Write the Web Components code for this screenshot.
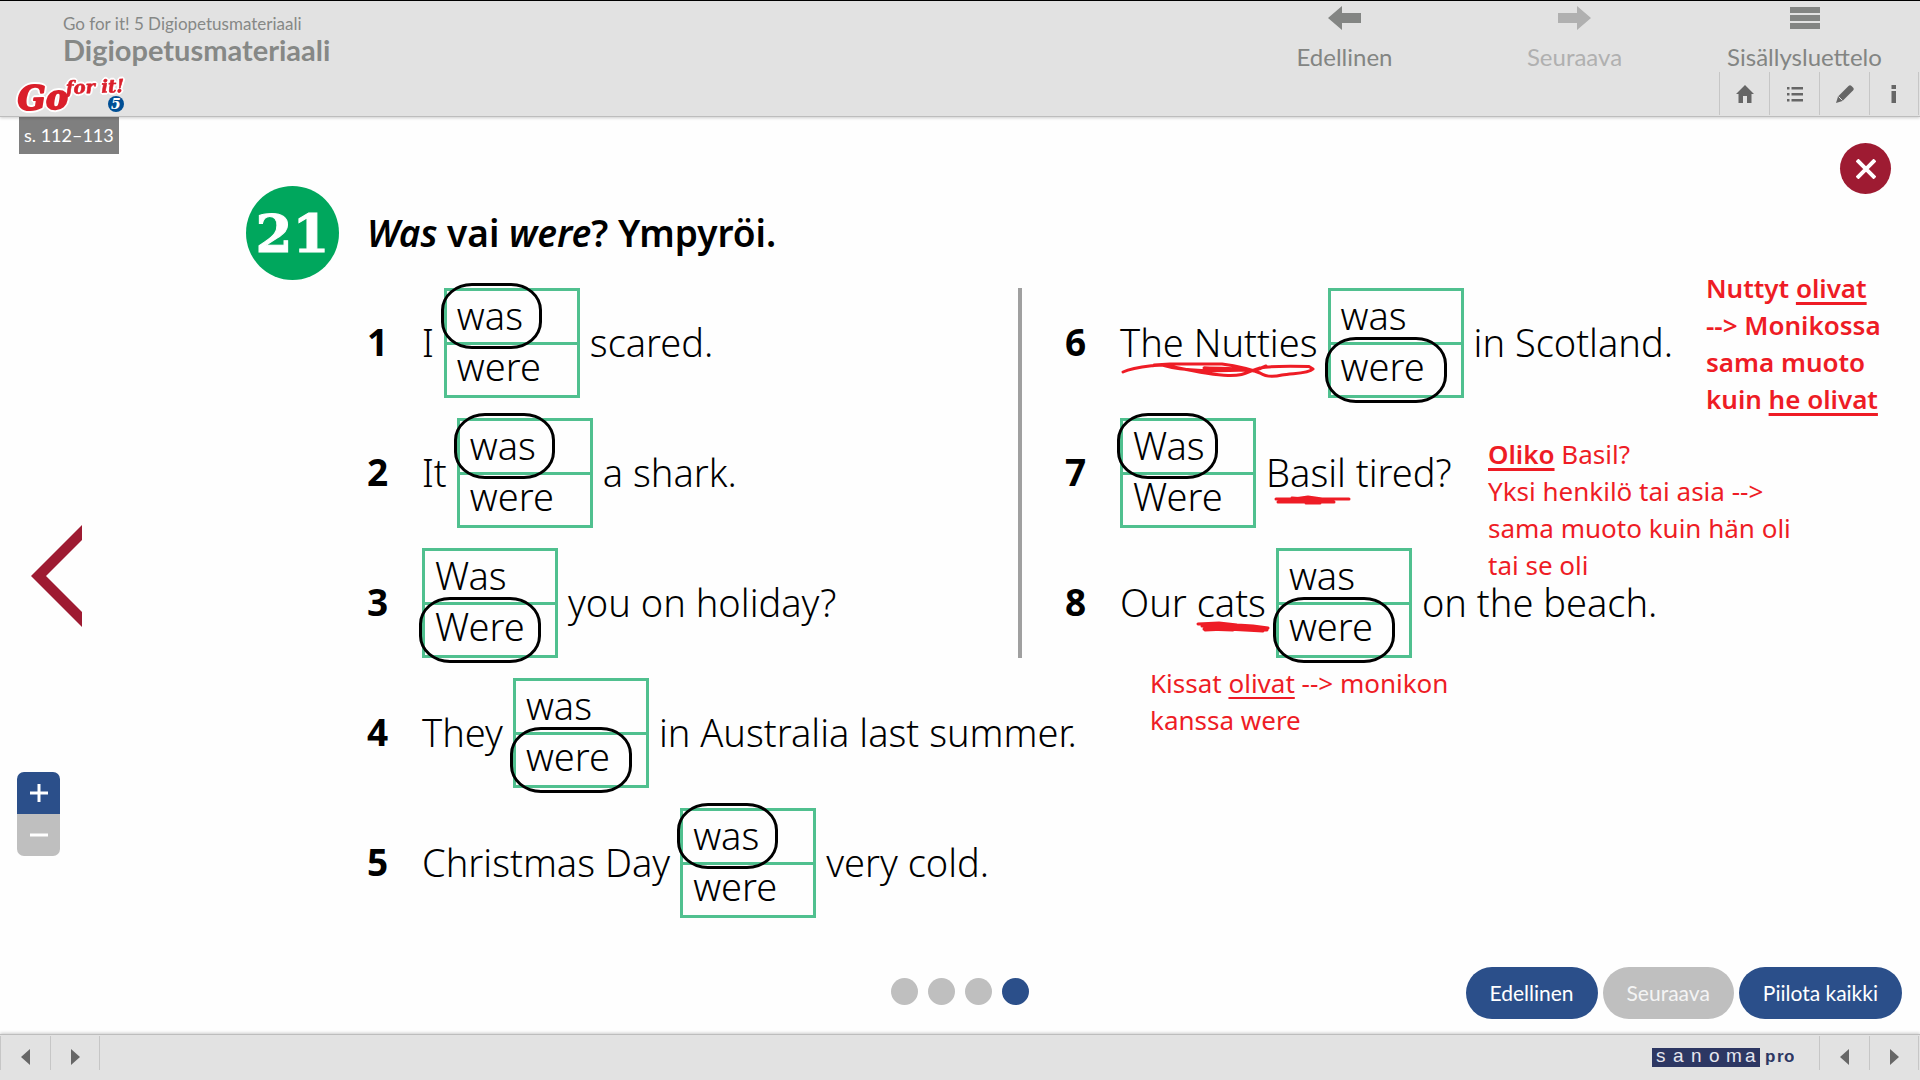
<!DOCTYPE html>
<html lang="fi">
<head>
<meta charset="utf-8">
<title>Go for it! 5 Digiopetusmateriaali</title>
<style>
body{margin:0;background:#fefefe;color:#000;font-family:Lato,"Liberation Sans",sans-serif}
</style>
</head>
<body>
<lesson-page></lesson-page>
<script>
const define = (name, html, setup) => customElements.define(name, class extends HTMLElement {
  constructor() {
    super();
    const t = document.createElement('template');
    t.innerHTML = html;
    this.attachShadow({mode: 'open'}).append(t.content.cloneNode(true));
  }
  connectedCallback() { if (setup) setup(this, this.shadowRoot); }
});

const RESET = `*,*::after{box-sizing:border-box}
button{font:inherit;color:inherit;background:none;border:0;padding:0;margin:0;display:block;cursor:pointer}
svg{display:block}`;

/* Brand logo */
define('brand-logo', `<style>:host{display:block;width:112px;height:42px}svg{display:block;overflow:visible}
text{font-family:"DejaVu Serif",serif;font-weight:700;font-style:italic}
g{filter:drop-shadow(1px 1px 0 #fff) drop-shadow(-1px -1px 0 #fff) drop-shadow(1px -1px 0 #fff) drop-shadow(-1px 1px 0 #fff)}</style>
<svg width="112" height="42" viewBox="15 74 112 42" role="img" aria-label="Go for it! 5">
<g fill="#da1f2b" stroke="#da1f2b" stroke-linejoin="round">
<text x="18" y="110" font-size="33" stroke-width="2" transform="rotate(-2 17 111)">Go</text>
<text x="66" y="94" font-size="18" stroke-width=".6" transform="rotate(-2 66 94)">for it!</text></g>
<circle cx="116" cy="104" r="8" fill="#004f95"/>
<text x="111" y="109" font-size="14" fill="#fff">5</text></svg>`);

/* Large labelled button of the top bar; the icon comes through the slot */
define('nav-button', `<style>${RESET}
:host{display:block;flex:0 0 230px;color:#838583}
:host([off]){color:#b0b0b0}
button{width:100%;height:71px;display:flex;flex-direction:column;align-items:center;gap:11px;padding:3px 1px 0 0;font-size:24px;line-height:28px}
.i{height:28px;display:flex;align-items:center}</style>
<button type="button"><span class="i"><slot name="icon"></slot></span><slot></slot></button>`,
(el, r) => { r.querySelector('button').disabled = el.hasAttribute('off'); });

/* Small icon cell with a separator */
define('tool-button', `<style>${RESET}
:host{display:block;flex:0 0 50px;height:100%;border-left:1px solid #c6c6c6;color:#666}
:host([last]){border-right:1px solid #c6c6c6}
button{width:100%;height:100%;display:flex;align-items:center;justify-content:center}</style>
<button type="button"><slot></slot></button>`,
(el, r) => r.querySelector('button').setAttribute('aria-label', el.getAttribute('label')));

define('pill-button', `<style>${RESET}
:host{display:block}
button{height:52px;border-radius:26px;padding:0 24px;background:#2b4f8a;color:#fff;font-size:21px;line-height:52px;white-space:nowrap}
:host([off]) button{background:#bfbfbf;color:#f4f4f4}</style>
<button type="button"><slot></slot></button>`,
(el, r) => { r.querySelector('button').disabled = el.hasAttribute('off'); });

/* Two stacked options, one of them ringed */
define('word-choice', `<style>${RESET}
:host{display:block;flex:0 0 136px;height:110px;box-sizing:border-box;border:3px solid #50c08f;line-height:42px}
button{position:relative;display:block;width:100%;text-align:left;padding-left:10px}
button:first-of-type{height:54px;padding-bottom:4px;border-bottom:3px solid #50c08f}
button:last-of-type{height:50px;padding-bottom:8px}
button[aria-pressed=true]::after{content:"";position:absolute;z-index:1;left:-6px;top:-8px;width:101px;height:66px;border:3px solid #000;border-radius:31px/27px}
button:last-of-type[aria-pressed=true]::after{width:122px}</style>
<button type="button"></button><button type="button"></button>`,
(el, r) => {
  r.querySelectorAll('button').forEach((b, i) => {
    b.textContent = el.getAttribute('words').split(' ')[i];
    b.setAttribute('aria-pressed', String(+el.getAttribute('pick') === i + 1));
  });
});

/* Numbered sentence */
define('quiz-item', `<style>${RESET}
:host{display:flex;align-items:center;height:110px;white-space:nowrap;font-size:38px;line-height:48px}
b{flex:0 0 55px;font-size:37px;font-weight:700;padding-bottom:2px}
.s{display:flex;align-items:center;gap:10px}
::slotted(span){padding-bottom:2px}</style>
<b></b><div class="s"><slot></slot></div>`,
(el, r) => { r.querySelector('b').textContent = el.getAttribute('n'); });

/* Red pen line drawn under a word */
define('pen-mark', `<style>:host{position:relative;display:inline-block}
svg{position:absolute;left:0;bottom:-13px;overflow:visible;fill:none;stroke:#ee1c25;stroke-width:3;stroke-linecap:round;stroke-linejoin:round}</style>
<slot></slot><svg width="196" height="16"></svg>`,
(el, r) => {
  const p = {
    long: 'M3 9C12 5 22 4 34 2.500L44 2C64 6 88 12 108 12.500C126 13 128 8 140 5C150 3 170 3 189 3.500L193 6C188 11 172 10 162 12C154 14 146 14 140 10C130 6 116 3 102 1L50 1L34 2M42 2C66 9 96 8 130 7L84 5C104 5 120 5 134 8L146 3',
    basil: 'M10 6L28 6L42 4L56 6L83 6M12 9L50 9L68 9M14 7L60 7M40 10L54 10M26 5L66 8',
    cats: 'M1 1L22 0L40 2L56 3L71 5M5 3L20 3L70 7M8 7L30 6L66 8M10 4L60 7M7 6L36 7M20 1L52 5'
  };
  r.querySelector('svg').innerHTML = '<path d="' + p[el.getAttribute('kind')] + '"/>';
});

define('red-note', `<style>:host{position:absolute;z-index:2;color:#ee1c25;font-family:"Noto Sans",sans-serif;font-size:26px;line-height:37px;white-space:nowrap}
::slotted(p){margin:0}</style><slot></slot>`);

define('top-bar', `<style>${RESET}
:host{display:flex;justify-content:space-between;height:117px;background:#e2e2e2;border-top:1px solid #000;border-bottom:1px solid #bdbdbd;box-shadow:0 1px 3px rgba(0,0,0,.2);position:relative;z-index:3;box-sizing:border-box;color:#868886}
.t{padding:13px 0 0 63px}
small{display:block;font-size:17px;line-height:20px}
h1{margin:0;font-size:29px;line-height:32px;font-weight:700}
brand-logo{margin:8px 0 0 -48px}
nav,.tools{display:flex}
.tools{height:43px;justify-content:flex-end;padding-right:1px}</style>
<div class="t"><small>Go for it! 5 Digiopetusmateriaali</small><h1>Digiopetusmateriaali</h1><brand-logo></brand-logo></div>
<div><nav>
<nav-button>Edellinen<svg slot="icon" width="33" height="24" fill="currentColor"><path d="M0 12L14 0V7H33V17H14V24Z"/></svg></nav-button>
<nav-button off>Seuraava<svg slot="icon" width="33" height="24" fill="currentColor"><path d="M33 12L19 0V7H0V17H19V24Z"/></svg></nav-button>
<nav-button>Sisällysluettelo<svg slot="icon" width="30" height="22" fill="currentColor"><path d="M0 0H30V6H0ZM0 8H30V14H0ZM0 16H30V22H0Z"/></svg></nav-button>
</nav><div class="tools">
<tool-button label="Koti"><svg width="18" height="18" fill="currentColor"><path d="M9 0L18 9H15.500V18H11V11H7V18H2.500V9H0Z"/></svg></tool-button>
<tool-button label="Lista"><svg width="16" height="16" fill="currentColor"><path d="M0 1H2.500V3.500H0ZM4.500 1H16V3.500H4.500ZM0 7H2.500V9.500H0ZM4.500 7H16V9.500H4.500ZM0 13H2.500V15.500H0ZM4.500 13H16V15.500H4.500Z"/></svg></tool-button>
<tool-button label="Kynä"><svg width="18" height="18" fill="currentColor"><path d="M0 18L2 11.500L12.500 1Q14 -.5 15.500 1L17 2.500Q18.500 4 17 5.500L6.500 16Z"/><path d="M2.500 11.500L6.500 15.500" stroke="#e2e2e2" stroke-width="1"/></svg></tool-button>
<tool-button label="Tiedot" last><svg width="6" height="18" fill="currentColor"><path d="M.5 0H5V4H.5ZM.5 6H5V18H.5Z"/></svg></tool-button>
</div></div>`);

define('side-rail', `<style>${RESET}
:host{display:flex;flex-direction:column;align-items:flex-start}
.p{margin-left:19px;padding:0 5px;height:37px;background:#7f7f7f;color:#fff;font-size:18px;line-height:37px}
.c{margin:371px 0 0 31px}
.z{margin:145px 0 0 17px;width:43px;border-radius:7px;overflow:hidden}
.z button{width:43px;height:42px;display:flex;align-items:center;justify-content:center;background:#2b4f8a}
.z button:last-child{background:#bfbfbf}</style>
<div class="p">s. 112–113</div>
<button class="c" type="button" aria-label="Edellinen sivu"><svg width="51" height="102"><path d="M51 0V15L15 51L51 87V102L0 51Z" fill="#9e1b32"/></svg></button>
<div class="z"><button type="button" aria-label="Suurenna"><svg width="18" height="18"><path d="M0 9H18M9 0V18" stroke="#fff" stroke-width="3"/></svg></button><button type="button" aria-label="Pienennä"><svg width="18" height="18"><path d="M0 9H18" stroke="#fff" stroke-width="3"/></svg></button></div>`);

define('quiz-sheet', `<style>${RESET}
:host{display:block;padding-top:69px;font-family:"Noto Sans",sans-serif;font-weight:300}
header{display:flex;align-items:center;gap:28px;margin-bottom:8px}
.n{flex:0 0 93px;height:94px;border-radius:50%;background:#00a75d;color:#fff;font:700 53px/94px "DejaVu Serif",serif;text-align:center;-webkit-text-stroke:1px #fff}
h2{margin:0;font-size:37px;line-height:48px;font-weight:600}
.g{display:grid;grid-template-columns:651px minmax(0,1fr);align-items:start;padding-left:121px}
.l,.r{display:flex;flex-direction:column;gap:20px}
.r{border-left:4px solid #a0a0a0;padding-left:43px}</style>
<header><div class="n">21</div><h2><i>Was</i> vai <i>were</i>? Ympyröi.</h2></header>
<div class="g"><div class="l">
<quiz-item n="1"><span>I</span><word-choice words="was were" pick="1"></word-choice><span>scared.</span></quiz-item>
<quiz-item n="2"><span>It</span><word-choice words="was were" pick="1"></word-choice><span>a shark.</span></quiz-item>
<quiz-item n="3"><word-choice words="Was Were" pick="2"></word-choice><span>you on holiday?</span></quiz-item>
<quiz-item n="4"><span>They</span><word-choice words="was were" pick="2"></word-choice><span>in Australia last summer.</span></quiz-item>
<quiz-item n="5"><span>Christmas Day</span><word-choice words="was were" pick="1"></word-choice><span>very cold.</span></quiz-item>
</div><div class="r">
<quiz-item n="6"><span><pen-mark kind="long">The Nutties</pen-mark></span><word-choice words="was were" pick="2"></word-choice><span>in Scotland.</span></quiz-item>
<quiz-item n="7"><word-choice words="Was Were" pick="1"></word-choice><span><pen-mark kind="basil">Basil</pen-mark> tired?</span></quiz-item>
<quiz-item n="8"><span>Our <pen-mark kind="cats">cats</pen-mark></span><word-choice words="was were" pick="2"></word-choice><span>on the beach.</span></quiz-item>
</div></div>`);

define('page-controls', `<style>${RESET}
:host{display:grid;grid-template-columns:1fr auto 1fr;align-items:center;padding:0 18px 15px}
.d{grid-column:2;display:flex;gap:10px;padding-bottom:4px}
.d button{width:27px;height:27px;border-radius:50%;background:#bfbfbf}
.d button[aria-current]{background:#2b4f8a}
.b{display:flex;gap:5px;justify-content:flex-end}</style>
<div class="d"><button aria-label="Sivu 1"></button><button aria-label="Sivu 2"></button><button aria-label="Sivu 3"></button><button aria-label="Sivu 4" aria-current="page"></button></div>
<div class="b"><pill-button>Edellinen</pill-button><pill-button off>Seuraava</pill-button><pill-button>Piilota kaikki</pill-button></div>`);

define('bottom-bar', `<style>${RESET}
:host{display:flex;justify-content:space-between;height:46px;padding:1px 1px 10px 0;background:#e2e2e2;border-top:1px solid #bdbdbd;box-shadow:0 -1px 3px rgba(0,0,0,.2);box-sizing:border-box}
div{display:flex;align-items:center}
svg{margin-top:8px}
.logo{margin-right:25px}
text{font-family:"Liberation Sans",sans-serif}</style>
<div><tool-button label="Takaisin"><svg width="9" height="16" fill="currentColor"><path d="M9 0V16L0 8Z"/></svg></tool-button><tool-button label="Eteenpäin" last><svg width="9" height="16" fill="currentColor"><path d="M0 0V16L9 8Z"/></svg></tool-button></div>
<div><svg class="logo" width="142" height="24" role="img" aria-label="sanoma pro"><rect y="3" width="108" height="19" fill="#2d3763"/>
<text x="4 21 39 57 74 93" y="17" font-size="19" fill="#e6e6ee">sanoma</text>
<text x="113 125 132" y="17" font-size="17" font-weight="700" fill="#2d3763">pro</text></svg>
<tool-button label="Edellinen"><svg width="9" height="16" fill="currentColor"><path d="M9 0V16L0 8Z"/></svg></tool-button><tool-button label="Seuraava" last><svg width="9" height="16" fill="currentColor"><path d="M0 0V16L9 8Z"/></svg></tool-button></div>`);

define('lesson-page', `<style>${RESET}
:host{display:flex;flex-direction:column;min-height:100vh}
main{flex:1;position:relative;display:grid;grid-template-columns:246px minmax(0,1fr) 80px;grid-template-rows:1fr auto}
page-controls{grid-column:1/-1}
.x{width:51px;height:51px;margin-top:26px;border-radius:50%;background:#9e1b32;display:flex;align-items:center;justify-content:center}
.n1{left:1706px;top:153px;font-weight:600}.n2{left:1488px;top:319px}.n3{left:1150px;top:548px}
u{text-decoration-thickness:2px;text-underline-offset:4px}
.n1 u,b u{text-decoration-thickness:3px}
b{font-weight:600}</style>
<top-bar></top-bar>
<main><side-rail></side-rail><quiz-sheet></quiz-sheet>
<div><button class="x" type="button" aria-label="Sulje"><svg width="20" height="20"><path d="M1 1L19 19M19 1L1 19" stroke="#fff" stroke-width="4"/></svg></button></div>
<page-controls></page-controls>
<red-note class="n1"><p>Nuttyt <u>olivat</u></p><p>--&gt; Monikossa</p><p>sama muoto</p><p>kuin <u>he olivat</u></p></red-note>
<red-note class="n2"><p><b><u>Oliko</u></b> Basil?</p><p>Yksi henkilö tai asia --&gt;</p><p>sama muoto kuin hän oli</p><p>tai se oli</p></red-note>
<red-note class="n3"><p>Kissat <u>olivat</u> --&gt; monikon</p><p>kanssa were</p></red-note>
</main>
<bottom-bar></bottom-bar>`);
</script>
</body>
</html>
